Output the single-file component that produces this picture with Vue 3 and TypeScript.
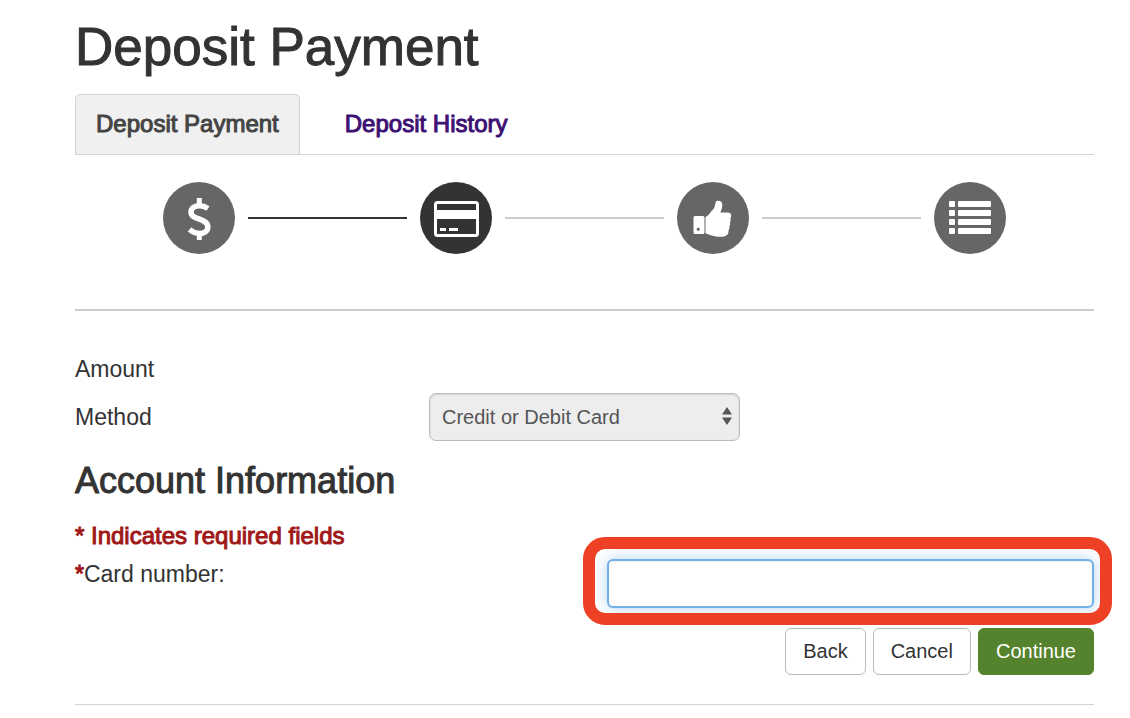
<script setup lang="ts">
import { ref } from 'vue'

type StepName = 'amount' | 'card' | 'confirm' | 'receipt'
interface Step {
  name: StepName
  label: string
}

const steps: Step[] = [
  { name: 'amount', label: 'Amount' },
  { name: 'card', label: 'Method' },
  { name: 'confirm', label: 'Confirmation' },
  { name: 'receipt', label: 'Receipt' },
]
const current: StepName = 'card'
const method = ref('card')
const cardNumber = ref('')
</script>

<template>
  <main class="page">
    <h1>Deposit Payment</h1>

    <nav class="tabs">
      <a class="tab selected" href="#payment" aria-current="page">Deposit Payment</a>
      <a class="tab" href="#history">Deposit History</a>
    </nav>

    <div class="steps">
      <template v-for="(step, i) in steps" :key="step.name">
        <span v-if="i > 0" class="line" :class="{ done: i === 1 }"></span>
        <span class="step" :class="{ current: step.name === current }" role="img" :aria-label="step.label">
          <svg v-if="step.name === 'amount'" viewBox="0 0 72 72" fill="none" stroke="#fff">
            <path d="M36.300 16v6M36.300 51v7" stroke-width="5" />
            <path d="M45 26.500c-3-2-5.500-2.800-8.500-2.800-5 0-8.500 2.500-8.500 6.300 0 4.200 3.500 5.500 8.500 7.200 5 1.800 8.300 3.500 8.300 7.800 0 4-3.500 6.500-8.300 6.500-4 0-7-1.500-10-4" stroke-width="5.500" />
          </svg>
          <svg v-else-if="step.name === 'card'" viewBox="0 0 72 72">
            <rect x="15.500" y="20.500" width="42" height="33" rx="2" fill="none" stroke="#fff" stroke-width="3" />
            <path d="M15 28h43v9H15zM20 46h6v3h-6zM29 46h9v3h-9z" fill="#fff" />
          </svg>
          <svg v-else-if="step.name === 'confirm'" viewBox="0 0 72 72">
            <path fill="#fff" fill-rule="evenodd" d="M18 34h8q1.500 0 1.500 1.500v15q0 1.500-1.500 1.500h-8q-1.500 0-1.500-1.500v-15Q16.500 34 18 34zM21.200 45.700a1.600 1.600 0 1 0 .1 0z" />
            <path fill="#fff" d="M28.500 36q0-1.500 1.500-2c3-2 4-5 6.300-6.800 1.800-1.500 1.500-4.500 2.200-6.400.5-1.500 1.500-2.100 3-2 4 .3 4.300 4 3.500 7.200l-1.700 4.500h7c3 0 4.200 1.300 3.900 3.500-.2 1.500-.9 2-.9 2.600.7 1.200.4 3-.4 4 .6 1.500.2 3-.6 4 .5 1.500 0 3-.8 3.800.2 2-.5 3.600-1.500 4.600-1.500 1.500-5 2-8.500 1.800-3.500-.3-8-1.600-11-2.800-1.500-.4-2-.8-2-2z" />
          </svg>
          <svg v-else viewBox="0 0 72 72" fill="#fff">
            <template v-for="y in [19, 28, 37, 46]" :key="y">
              <rect x="15" :y="y" width="6" height="6" rx="1" />
              <rect x="24" :y="y" width="33" height="6" rx="1" />
            </template>
          </svg>
        </span>
      </template>
    </div>

    <form @submit.prevent>
      <div class="row amount">
        <span>Amount</span>
      </div>
      <div class="row method">
        <label for="method">Method</label>
        <div class="picker">
          <select id="method" v-model="method">
            <option value="card">Credit or Debit Card</option>
          </select>
          <svg class="arrows" viewBox="0 0 10 18" aria-hidden="true">
            <path d="M5 0l5 7.500H0zM0 10.500h10L5 18z" fill="#555" />
          </svg>
        </div>
      </div>

      <h2>Account Information</h2>
      <p class="required">* Indicates required fields</p>

      <div class="card-row">
        <label for="card-number"><span class="star">*</span>Card number:</label>
        <div class="field">
          <span class="highlight"></span>
          <input id="card-number" v-model="cardNumber" type="text" />
        </div>
      </div>

      <div class="actions">
        <button type="button">Back</button>
        <button type="button">Cancel</button>
        <button type="submit" class="primary">Continue</button>
      </div>
    </form>
    <hr />
  </main>
</template>

<style>
body {
  margin: 0;
  background: #fff;
}
</style>

<style scoped>
.page {
  box-sizing: border-box;
  padding: 16px 36px 12px 75px;
  font-family: "Liberation Sans", Arial, sans-serif;
  font-size: 23px;
  line-height: 32px;
  color: #333;
}
h1 {
  margin: 0 0 16px;
  font-size: 53px;
  line-height: 62px;
  font-weight: 400;
  -webkit-text-stroke: 1px currentColor;
}
.tabs {
  display: flex;
  border-bottom: 1px solid #d4d4d4;
}
.tab {
  padding: 13px 20px 14px;
  border: 1px solid transparent;
  border-bottom: 0;
  margin-right: 24px;
  border-radius: 5px 5px 0 0;
  font-size: 24px;
  color: #3c1073;
  text-decoration: none;
  -webkit-text-stroke: 1px currentColor;
}
.tab.selected {
  background: #f0f0f0;
  border-color: #d4d4d4;
  color: #444;
}
.steps {
  display: flex;
  align-items: center;
  gap: 13px;
  padding: 27px 88px 55px;
  border-bottom: 2px solid #ccc;
}
.step {
  width: 72px;
  height: 72px;
  flex: none;
  border-radius: 50%;
  background: #666;
}
.step.current {
  background: #333;
}
.step svg {
  display: block;
  width: 100%;
}
.line {
  flex: 1;
  height: 2px;
  background: #ccc;
}
.line.done {
  background: #333;
}
.row {
  display: grid;
  grid-template-columns: 354fr 311fr 354fr;
  align-items: center;
}
.amount {
  margin-top: 42px;
}
.method {
  margin-top: 8px;
}
.picker {
  position: relative;
}
select {
  display: block;
  width: 100%;
  height: 48px;
  padding: 0 12px;
  appearance: none;
  border: 1px solid #bbb;
  border-radius: 7px;
  background: #ededed;
  box-shadow: inset 0 1px 2px rgba(0, 0, 0, 0.12);
  font: 20px "Liberation Sans", Arial, sans-serif;
  color: #555;
}
.arrows {
  position: absolute;
  top: 14px;
  right: 8px;
  width: 10px;
  height: 18px;
  pointer-events: none;
}
h2 {
  margin: 19px 0 18px;
  font-size: 36px;
  line-height: 42px;
  font-weight: 400;
  -webkit-text-stroke: 1px currentColor;
}
.required {
  margin: 0;
  font-size: 24px;
  color: #a01818;
  -webkit-text-stroke: 1px currentColor;
}
.star {
  color: #a01818;
  -webkit-text-stroke: 1px currentColor;
}
.card-row {
  display: grid;
  grid-template-columns: 532fr 487fr;
  align-items: start;
  margin-top: 7px;
  line-height: 30px;
}
.field {
  position: relative;
}
input {
  display: block;
  box-sizing: border-box;
  width: 100%;
  height: 49px;
  padding: 0 12px;
  border: 2px solid #74b0e8;
  border-radius: 6px;
  outline: 0;
  background: #fff;
  box-shadow: 0 0 14px rgba(102, 169, 232, 0.5), inset 0 1px 2px rgba(0, 0, 0, 0.08);
  font: 20px "Liberation Sans", Arial, sans-serif;
  color: #333;
}
.highlight {
  position: absolute;
  inset: -22px -18px -17px -24px;
  border: 12px solid #ed4025;
  border-radius: 22px;
  pointer-events: none;
}
.actions {
  display: flex;
  justify-content: flex-end;
  gap: 7px;
  margin-top: 20px;
}
button {
  height: 47px;
  padding: 0 17px;
  border: 1px solid #bbb;
  border-radius: 6px;
  background: #fff;
  font: 20px "Liberation Sans", Arial, sans-serif;
  color: #333;
}
.primary {
  border-color: #55822d;
  background: #55822d;
  color: #fff;
}
hr {
  margin: 29px 0 0;
  border: 0;
  border-top: 1px solid #d4d4d4;
}
</style>
